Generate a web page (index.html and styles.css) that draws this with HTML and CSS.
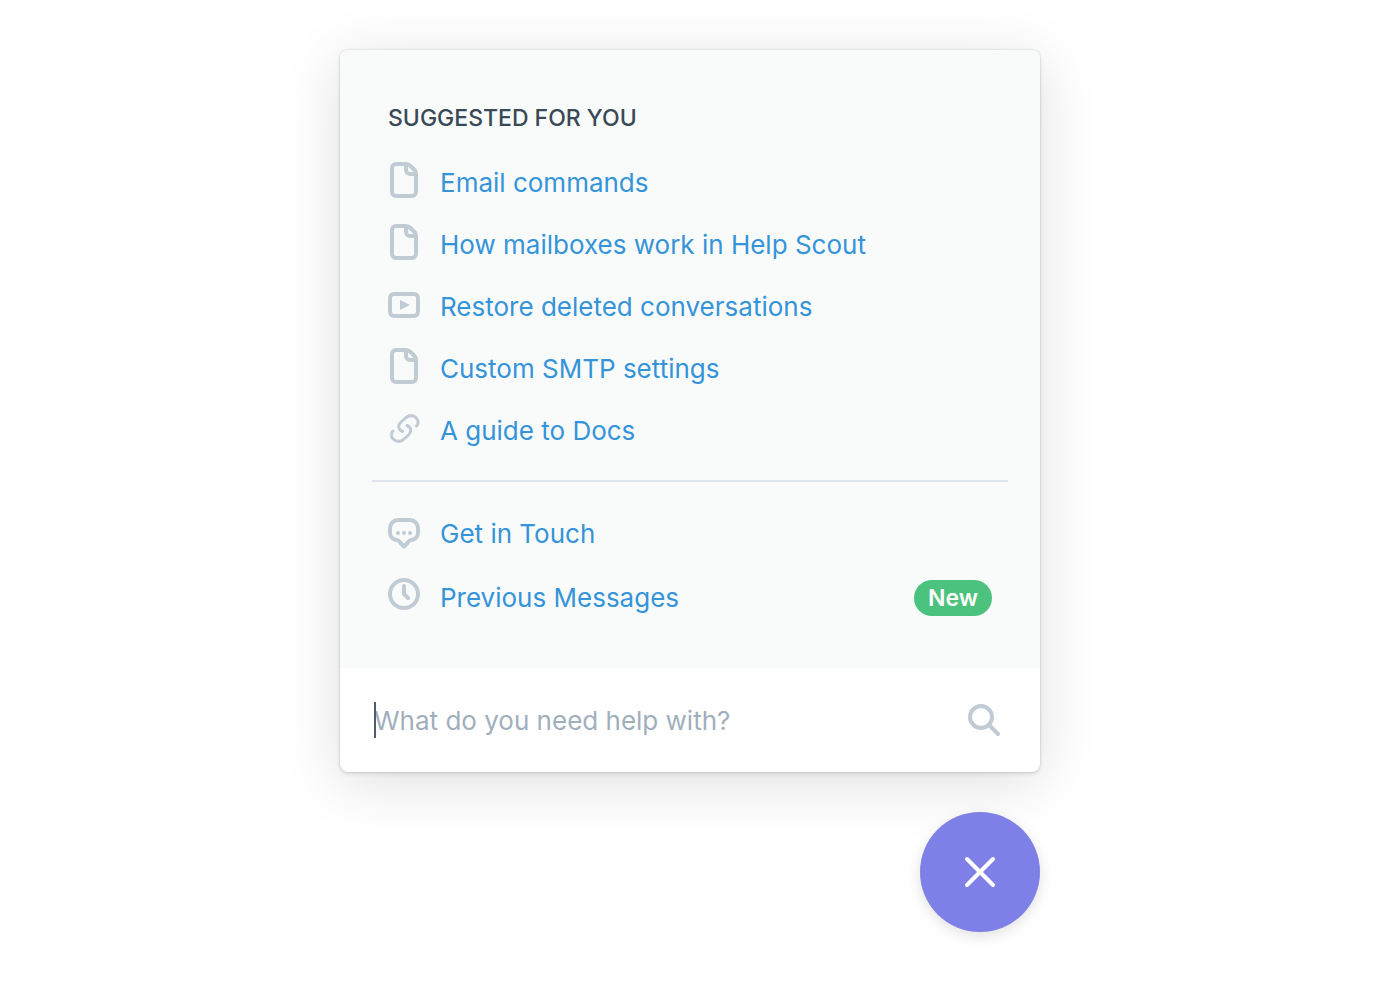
FILE: index.html
```html
<!DOCTYPE html>
<html lang="en">
<head>
<meta charset="utf-8">
<meta name="viewport" content="width=device-width, initial-scale=1">
<title>Help</title>
<link rel="stylesheet" href="styles.css">
</head>
<body>
<svg class="sprite" aria-hidden="true">
  <symbol id="doc" viewBox="0 0 32 40">
    <path d="M8 3H18C20 3 21 3.500 22.500 5L26.500 9C27.500 10 28 11 28 13V31a4 4 0 0 1-4 4H8a4 4 0 0 1-4-4V7a4 4 0 0 1 4-4Z"/>
    <path d="M18 4V9a4 4 0 0 0 4 4H27"/>
  </symbol>
  <symbol id="video" viewBox="0 0 32 40">
    <rect x="2" y="9" width="28" height="22" rx="4"/>
    <path class="solid" d="M12 15V25L22 20Z"/>
  </symbol>
  <symbol id="link" viewBox="0 0 32 40">
    <path d="M14.500 22.500C10.500 21 9.500 17 12.500 13.500L18 8.500C25 3.500 33 10.500 29 16.500L28.500 17"/>
    <path d="M19 16.500C23 18 24 22 21 25.500L15.500 30.500C8.500 35.500 0.500 28.500 4.500 22.500L5 22"/>
  </symbol>
  <symbol id="chat" viewBox="0 0 32 40">
    <path d="M10 8H22a8 8 0 0 1 8 8V21a7 7 0 0 1-7 7C21 28 20.500 30 19 31.500L16 34.500L13 31.500C11.500 30 11 28 9 28A7 7 0 0 1 2 21V16a8 8 0 0 1 8-8Z"/>
    <circle class="solid" cx="10" cy="21" r="2"/>
    <circle class="solid" cx="16" cy="21" r="2"/>
    <circle class="solid" cx="22" cy="21" r="2"/>
  </symbol>
  <symbol id="clock" viewBox="0 0 32 40">
    <circle cx="16" cy="18" r="14"/>
    <path d="M16 10V18L20 22"/>
  </symbol>
</svg>
<main class="beacon">
  <section class="panel" aria-label="Help">
    <div class="content">
      <h1 class="heading">SUGGESTED FOR YOU</h1>
      <nav class="list" aria-label="Suggested articles">
        <a class="item" href="#email"><svg class="icon" aria-hidden="true"><use href="#doc"/></svg><span class="label">Email commands</span></a>
        <a class="item" href="#mailboxes"><svg class="icon" aria-hidden="true"><use href="#doc"/></svg><span class="label">How mailboxes work in Help Scout</span></a>
        <a class="item" href="#restore"><svg class="icon" aria-hidden="true"><use href="#video"/></svg><span class="label">Restore deleted conversations</span></a>
        <a class="item" href="#smtp"><svg class="icon" aria-hidden="true"><use href="#doc"/></svg><span class="label">Custom SMTP settings</span></a>
        <a class="item" href="#guide"><svg class="icon icon-link" aria-hidden="true"><use href="#link"/></svg><span class="label">A guide to Docs</span></a>
      </nav>
      <nav class="list list-contact" aria-label="Contact">
        <a class="item" href="#contact"><svg class="icon" aria-hidden="true"><use href="#chat"/></svg><span class="label">Get in Touch</span></a>
        <a class="item" href="#messages"><svg class="icon" aria-hidden="true"><use href="#clock"/></svg><span class="label">Previous Messages</span><span class="badge">New</span></a>
      </nav>
    </div>
    <form class="search">
      <span class="caret" aria-hidden="true"></span>
      <input class="search-input" type="search" placeholder="What do you need help with?" aria-label="Search for help">
      <button class="search-button" type="button" aria-label="Search">
        <svg class="search-icon" viewBox="0 0 36 36" aria-hidden="true"><circle cx="15" cy="15" r="11"/><path d="M23 23L32 32"/></svg>
      </button>
    </form>
  </section>
  <button class="close" type="button" aria-label="Close">
    <svg class="close-icon" viewBox="0 0 32 32" aria-hidden="true"><path d="M3 3L29 29M29 3L3 29"/></svg>
  </button>
</main>
</body>
</html>
```
FILE: styles.css
```css
* {
  box-sizing: border-box;
}

body {
  margin: 0;
  background: #fff;
  font-family: Inter, "Liberation Sans", sans-serif;
  font-size: 26px;
}

.sprite {
  position: absolute;
  width: 0;
  height: 0;
}

.beacon {
  display: flex;
  flex-direction: column;
  align-items: flex-end;
  gap: 40px;
  max-width: 700px;
  margin: 0 auto;
  padding: 50px 0;
}

.panel {
  width: 100%;
  overflow: hidden;
  border-radius: 8px;
  background: #fff;
  box-shadow: 0 0 2px rgba(0, 0, 0, 0.2), 0 2px 4px rgba(0, 0, 0, 0.1), 0 10px 60px rgba(0, 0, 0, 0.13);
}

.content {
  padding: 52px 32px 38px;
  background: #f9fbfa;
}

.heading {
  margin: 0 16px 18px;
  color: #394956;
  font-size: 23px;
  font-weight: 500;
  line-height: 32px;
}

.list {
  display: flex;
  flex-direction: column;
}

.list-contact {
  margin-top: 18px;
  padding-top: 20px;
  border-top: 2px solid #dfe5ee;
}

.item {
  display: flex;
  align-items: center;
  gap: 20px;
  padding: 8px 16px;
  color: #3594d9;
  line-height: 46px;
  text-decoration: none;
}

.list-contact .item {
  line-height: 48px;
}

.icon {
  flex: none;
  width: 32px;
  height: 40px;
  margin-bottom: 4px;
  fill: none;
  stroke: #c1cbd4;
  stroke-width: 4px;
  stroke-linecap: round;
  stroke-linejoin: round;
}

.icon-link {
  stroke-width: 3px;
}

.solid {
  fill: #c1cbd4;
  stroke: none;
}

.label {
  flex: 1;
}

.badge {
  padding: 0 14px;
  border-radius: 18px;
  background: #4bc27d;
  color: #fff;
  font-size: 23px;
  font-weight: 600;
  line-height: 36px;
}

.search {
  position: relative;
  display: flex;
  align-items: center;
  padding: 32px 38px 32px 34px;
}

.caret {
  position: absolute;
  left: 34px;
  width: 2px;
  height: 36px;
  background: #4f5d6b;
}

.search-input {
  flex: 1;
  min-width: 0;
  height: 40px;
  padding: 0;
  border: 0;
  outline: 0;
  background: transparent;
  color: #394956;
  font: inherit;
}

.search-input::placeholder {
  color: #a1afbd;
}

.search-button {
  display: flex;
  padding: 0;
  border: 0;
  background: none;
}

.search-icon {
  width: 36px;
  height: 36px;
  fill: none;
  stroke: #c1cbd4;
  stroke-width: 4px;
  stroke-linecap: round;
}

.close {
  display: flex;
  align-items: center;
  justify-content: center;
  width: 120px;
  height: 120px;
  padding: 0;
  border: 0;
  border-radius: 50%;
  background: #7e80e7;
  box-shadow: 0 4px 14px rgba(0, 0, 0, 0.12);
}

.close-icon {
  width: 32px;
  height: 32px;
  fill: none;
  stroke: #fff;
  stroke-width: 4px;
  stroke-linecap: round;
}
```
